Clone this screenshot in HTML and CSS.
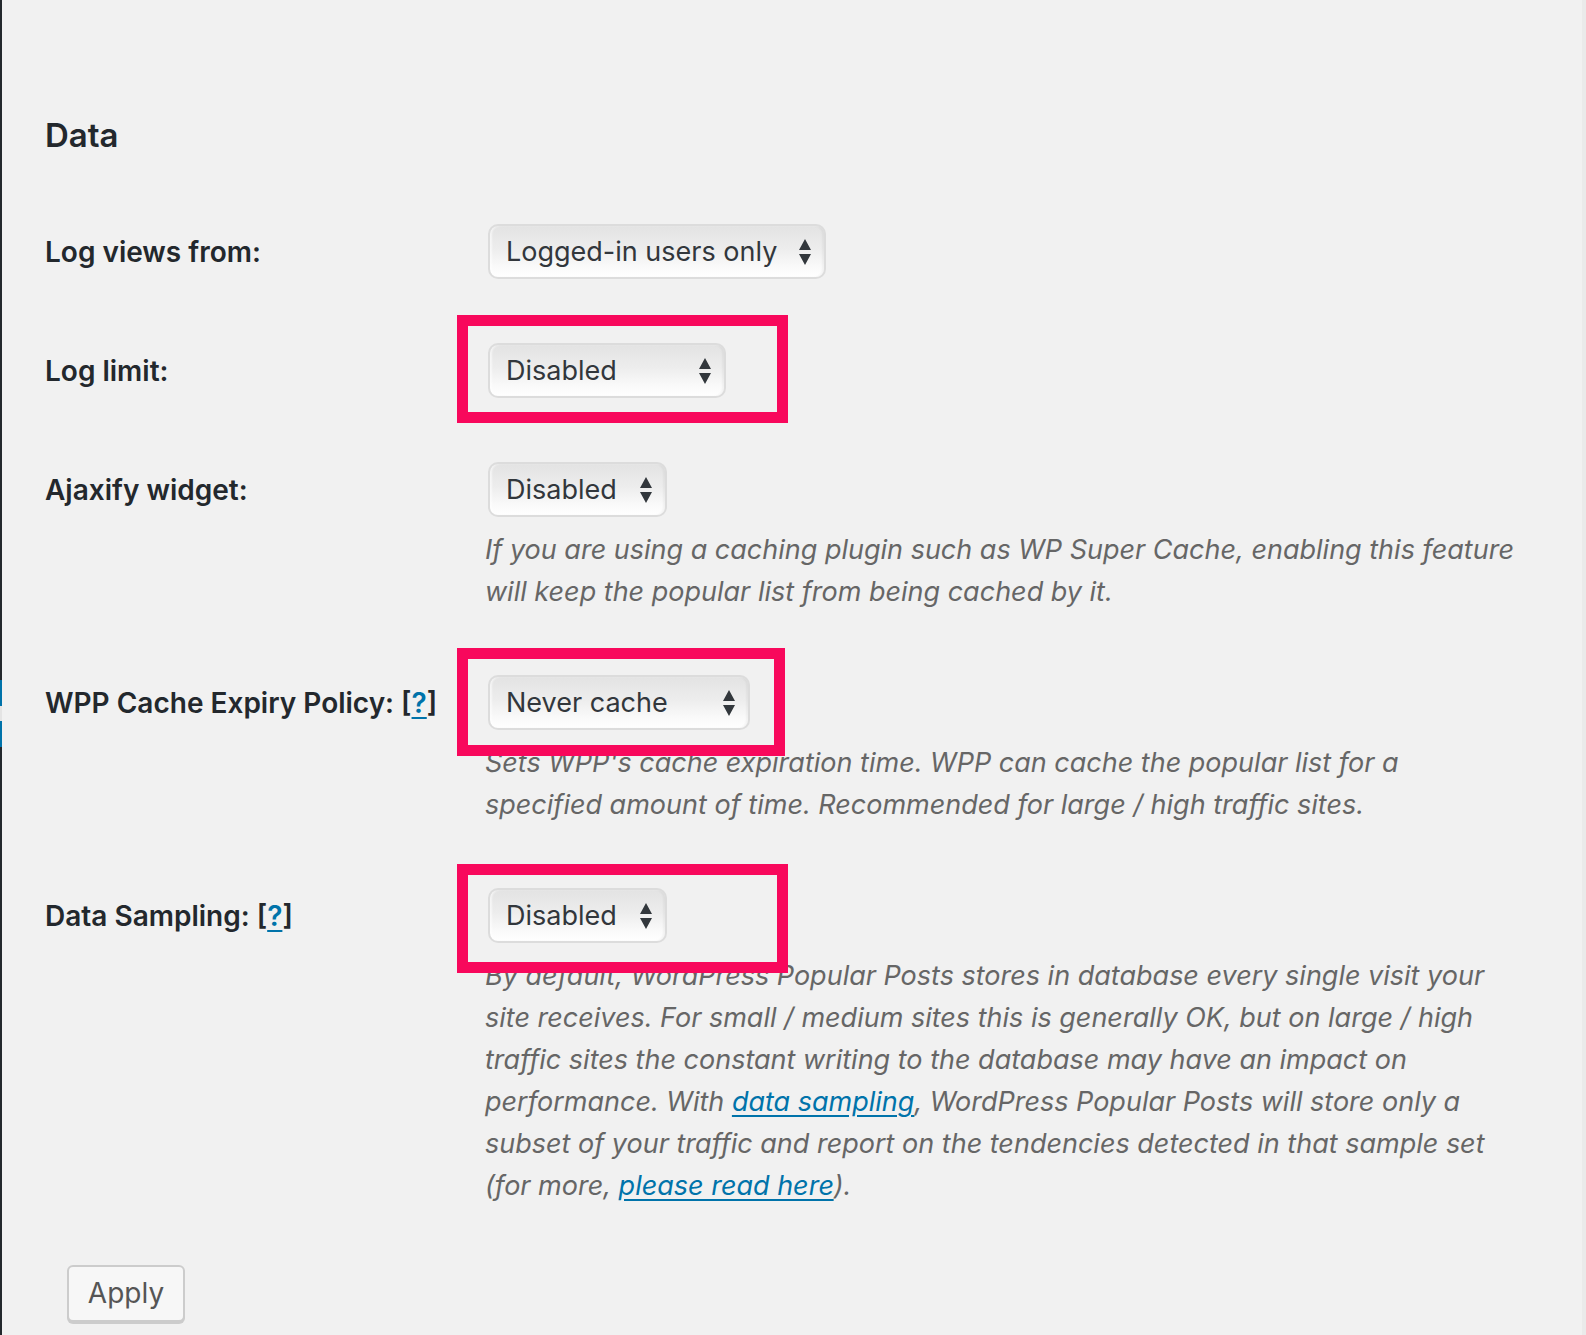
FILE: index.html
```html
<!DOCTYPE html>
<html lang="en">
<head>
<meta charset="utf-8">
<title>Data settings</title>
<link rel="stylesheet" href="styles.css">
</head>
<body>
<div class="page">
  <div class="admin-edge">
    <span class="edge-dark edge-top"></span>
    <span class="edge-blue"></span>
    <span class="edge-gap"></span>
    <span class="edge-blue"></span>
    <span class="edge-dark edge-rest"></span>
  </div>
  <main class="main">
    <h2 class="section-title">Data</h2>
    <table class="form-table">
      <tbody>
        <tr>
          <th>Log views from:</th>
          <td>
            <span class="sel-wrap">
              <span class="select sel-views"><span class="sel-text">Logged-in users only</span><svg class="arrows" viewBox="0 0 12 26" width="12" height="26"><path d="M0 11 L6 0 L12 11 Z M0 15 L12 15 L6 26 Z"/></svg></span>
            </span>
          </td>
        </tr>
        <tr>
          <th>Log limit:</th>
          <td>
            <span class="sel-wrap">
              <span class="select sel-limit"><span class="sel-text">Disabled</span><svg class="arrows" viewBox="0 0 12 26" width="12" height="26"><path d="M0 11 L6 0 L12 11 Z M0 15 L12 15 L6 26 Z"/></svg></span>
              <span class="mark mark-limit"></span>
            </span>
          </td>
        </tr>
        <tr>
          <th>Ajaxify widget:</th>
          <td>
            <span class="sel-wrap">
              <span class="select sel-ajax"><span class="sel-text">Disabled</span><svg class="arrows" viewBox="0 0 12 26" width="12" height="26"><path d="M0 11 L6 0 L12 11 Z M0 15 L12 15 L6 26 Z"/></svg></span>
            </span>
            <p class="description">If you are using a caching plugin such as WP Super Cache, enabling this feature will keep the popular list from being cached by it.</p>
          </td>
        </tr>
        <tr>
          <th>WPP Cache Expiry Policy: <span class="help">[<a href="#">?</a>]</span></th>
          <td>
            <span class="sel-wrap">
              <span class="select sel-cache"><span class="sel-text">Never cache</span><svg class="arrows" viewBox="0 0 12 26" width="12" height="26"><path d="M0 11 L6 0 L12 11 Z M0 15 L12 15 L6 26 Z"/></svg></span>
              <span class="mark mark-cache"></span>
            </span>
            <p class="description">Sets WPP's cache expiration time. WPP can cache the popular list for a specified amount of time. Recommended for large / high traffic sites.</p>
          </td>
        </tr>
        <tr>
          <th>Data Sampling: <span class="help">[<a href="#">?</a>]</span></th>
          <td>
            <span class="sel-wrap">
              <span class="select sel-sampling"><span class="sel-text">Disabled</span><svg class="arrows" viewBox="0 0 12 26" width="12" height="26"><path d="M0 11 L6 0 L12 11 Z M0 15 L12 15 L6 26 Z"/></svg></span>
              <span class="mark mark-sampling"></span>
            </span>
            <p class="description">By default, WordPress Popular Posts stores in database every single visit your site receives. For small / medium sites this is generally OK, but on large / high traffic sites the constant writing to the database may have an impact on performance. With <a href="#">data sampling</a>, WordPress Popular Posts will store only a subset of your traffic and report on the tendencies detected in that sample set (for more, <a href="#">please read here</a>).</p>
          </td>
        </tr>
      </tbody>
    </table>
    <div class="submit">
      <button class="button" type="button">Apply</button>
    </div>
  </main>
  <div class="right-edge"></div>
</div>
</body>
</html>
```

FILE: styles.css
```css
html, body {
  margin: 0;
  padding: 0;
  background: #f1f1f1;
}

body {
  font-family: Inter, "Noto Sans", "Liberation Sans", sans-serif;
  color: #23282d;
}

.page {
  display: flex;
  min-height: 1335px;
}

.admin-edge {
  width: 2px;
  display: flex;
  flex-direction: column;
  flex: none;
}

.edge-dark { background: #23282d; display: block; }
.edge-top { height: 680px; }
.edge-blue { background: #0073aa; height: 26px; display: block; }
.edge-gap { background: #e4e4e4; height: 15px; display: block; }
.edge-rest { flex: 1; }

.right-edge {
  width: 4px;
  flex: none;
  background: #eaeaea;
}

.main {
  flex: 1;
  padding: 0 43px 0 43px;
}

.section-title {
  font-size: 33px;
  font-weight: 600;
  line-height: 46px;
  margin: 112px 0 0 0;
  color: #23282d;
}

.form-table {
  border-collapse: collapse;
  width: 100%;
  margin-top: 34px;
}

.form-table th {
  width: 400px;
  padding: 42px 20px 38px 0;
  text-align: left;
  vertical-align: top;
  font-size: 28px;
  font-weight: 600;
  line-height: 36px;
  color: #23282d;
}

.form-table td {
  padding: 30px 20px 30px 20px;
  vertical-align: top;
  font-size: 28px;
  line-height: 36px;
}

.help a {
  color: #0073aa;
  text-decoration: underline;
  text-underline-offset: 4px;
}

.sel-wrap {
  position: relative;
  display: inline-block;
  margin: 2px 0 2px 3px;
  vertical-align: top;
}

.select {
  box-sizing: border-box;
  height: 55px;
  display: flex;
  align-items: center;
  justify-content: space-between;
  padding: 0 13px 0 16px;
  border: 2px solid #dcdcdc;
  border-radius: 10px;
  background: linear-gradient(#e3e3e3 0%, #ededed 45%, #f8f8f8 75%, #ffffff 100%);
  box-shadow: inset 2px 0 2px rgba(255,255,255,0.6), inset -2px 0 2px rgba(0,0,0,0.04);
  color: #32373c;
  font-size: 27px;
  font-weight: 400;
}

.sel-text {
  white-space: nowrap;
  line-height: 36px;
}

.arrows {
  fill: #32373c;
  flex: none;
}

.sel-views { width: 338px; }
.sel-limit { width: 238px; }
.sel-ajax { width: 179px; }
.sel-cache { width: 262px; }
.sel-sampling { width: 179px; }

.mark {
  position: absolute;
  box-sizing: border-box;
  border: 11px solid #f8085c;
  left: -31px;
  pointer-events: none;
  z-index: 2;
}

.mark-limit { top: -28px; width: 331px; height: 108px; }
.mark-cache { top: -27px; width: 328px; height: 108px; }
.mark-sampling { top: -24px; width: 331px; height: 109px; }

.description {
  margin: 10px 0 0 0;
  font-style: italic;
  font-size: 27px;
  line-height: 42px;
  color: #666;
}

.description a {
  color: #0073aa;
  text-decoration: underline;
  text-underline-offset: 4px;
}

.submit {
  padding: 28px 0 0 22px;
}

.button {
  box-sizing: border-box;
  width: 118px;
  height: 57px;
  font-family: inherit;
  font-size: 28px;
  color: #555;
  background: #f7f7f7;
  border: 2px solid #cccccc;
  border-radius: 6px;
  box-shadow: 0 2px 0 #cccccc;
  padding: 0 0 2px 0;
}
```
